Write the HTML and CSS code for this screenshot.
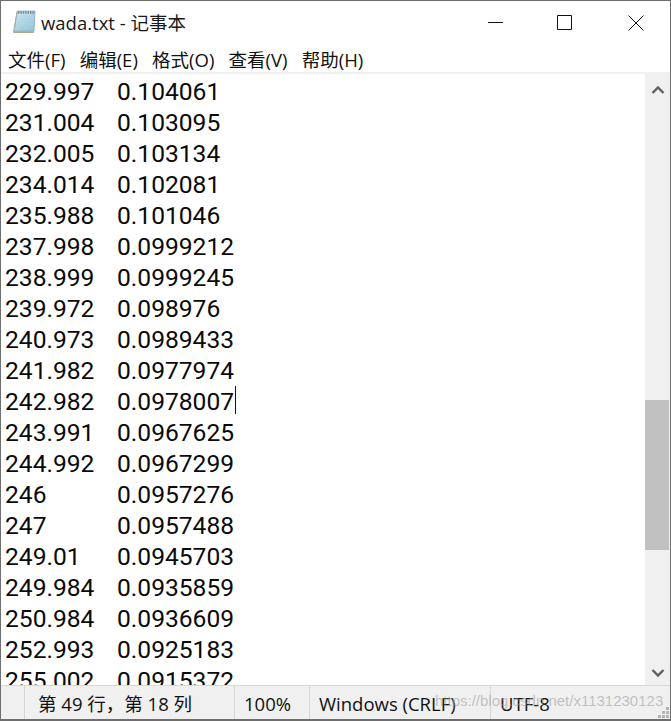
FILE: index.html
```html
<!DOCTYPE html>
<html lang="zh">
<head>
<meta charset="utf-8">
<title>wada.txt - 记事本</title>
<link rel="stylesheet" href="styles.css">
</head>
<body>
<div class="window">
  <header class="titlebar">
    <svg class="app-icon" width="26" height="28" viewBox="0 0 26 28">
      <defs>
        <linearGradient id="paper" x1="0" y1="0" x2="1" y2="1">
          <stop offset="0" stop-color="#d8edf5"/>
          <stop offset="1" stop-color="#8fc0d6"/>
        </linearGradient>
      </defs>
      <path d="M5 3.500H22.500L21.500 24.500H1.500Z" fill="#c9b98f" stroke="#b5a98c" stroke-width="1"/>
      <path d="M5.500 3H23L22 23H2Z" fill="url(#paper)" stroke="#7fa9bd" stroke-width=".7"/>
      <path d="M4.500 8H22M4 11H22M4 14H22M3.500 17H21.500M3 20H21.500" stroke="#a9d0e0" stroke-width=".8"/>
      <path d="M6 4.500H23" stroke="#76838b" stroke-width="2.4" stroke-dasharray="1.4 1"/>
    </svg>
    <span class="title">wada.txt - 记事本</span>
    <div class="controls">
      <svg class="ctl" width="16" height="16" viewBox="0 0 16 16"><path d="M0 7.500H15" stroke="#111" fill="none"/></svg>
      <svg class="ctl ctl-max" width="16" height="16" viewBox="0 0 16 16"><path d="M1.500 .5H15.500V14.500H1.500Z" stroke="#111" fill="none"/></svg>
      <svg class="ctl" width="16" height="16" viewBox="0 0 16 16"><path d="M.5 .5L15.500 15.500M15.500 .5L.5 15.500" stroke="#111" fill="none"/></svg>
    </div>
  </header>
  <nav class="menubar">
    <span>文件(F)</span><span>编辑(E)</span><span>格式(O)</span><span>查看(V)</span><span>帮助(H)</span>
  </nav>
  <main class="editor">
    <div class="text">
      <div class="row"><span class="c1">229.997</span><span>0.104061</span></div>
      <div class="row"><span class="c1">231.004</span><span>0.103095</span></div>
      <div class="row"><span class="c1">232.005</span><span>0.103134</span></div>
      <div class="row"><span class="c1">234.014</span><span>0.102081</span></div>
      <div class="row"><span class="c1">235.988</span><span>0.101046</span></div>
      <div class="row"><span class="c1">237.998</span><span>0.0999212</span></div>
      <div class="row"><span class="c1">238.999</span><span>0.0999245</span></div>
      <div class="row"><span class="c1">239.972</span><span>0.098976</span></div>
      <div class="row"><span class="c1">240.973</span><span>0.0989433</span></div>
      <div class="row"><span class="c1">241.982</span><span>0.0977974</span></div>
      <div class="row"><span class="c1">242.982</span><span class="caret">0.0978007</span></div>
      <div class="row"><span class="c1">243.991</span><span>0.0967625</span></div>
      <div class="row"><span class="c1">244.992</span><span>0.0967299</span></div>
      <div class="row"><span class="c1">246</span><span>0.0957276</span></div>
      <div class="row"><span class="c1">247</span><span>0.0957488</span></div>
      <div class="row"><span class="c1">249.01</span><span>0.0945703</span></div>
      <div class="row"><span class="c1">249.984</span><span>0.0935859</span></div>
      <div class="row"><span class="c1">250.984</span><span>0.0936609</span></div>
      <div class="row"><span class="c1">252.993</span><span>0.0925183</span></div>
      <div class="row"><span class="c1">255.002</span><span>0.0915372</span></div>
    </div>
    <aside class="scrollbar">
      <svg class="arrow" width="14" height="10" viewBox="0 0 14 10"><path d="M1.500 8L7 2.500L12.500 8" stroke="#606060" stroke-width="2.4" fill="none"/></svg>
      <div class="track"><div class="thumb"></div></div>
      <svg class="arrow" width="14" height="10" viewBox="0 0 14 10"><path d="M1.500 2L7 7.500L12.500 2" stroke="#606060" stroke-width="2.4" fill="none"/></svg>
    </aside>
  </main>
  <footer class="statusbar">
    <span class="cell first"></span>
    <span class="cell pos">第 49 行，第 18 列</span>
    <span class="cell zoom">100%</span>
    <span class="cell eol">Windows (CRLF)</span>
    <span class="cell enc">UTF-8</span>
    <span class="watermark">https://blog.csdn.net/x1131230123</span>
    <svg class="grip" width="12" height="12" viewBox="0 0 12 12"><path d="M8 0h3v3H8zM4 4h3v3H4zM8 4h3v3H8zM0 8h3v3H0zM4 8h3v3H4zM8 8h3v3H8z" fill="#b4b4b4"/></svg>
  </footer>
</div>
</body>
</html>
```
FILE: styles.css
```css
* { box-sizing: border-box; }
html, body { margin: 0; height: 100%; overflow: hidden; background: #fff; }
body { font-family: Roboto, "Noto Sans CJK SC", sans-serif; color: #111; }
.window {
  width: 671px; height: 721px;
  display: flex; flex-direction: column;
  border: 1px solid #6e6e6e; border-bottom-width: 2px;
  position: relative; overflow: hidden;
}
.titlebar { height: 41px; flex: none; display: flex; align-items: center; padding-left: 11px; }
.app-icon { flex: none; margin-right: 3px; margin-top: 1px; }
.title { font-size: 18.5px; font-family: "Open Sans", "Noto Sans CJK SC", sans-serif; color: #1a1a1a; }
.controls { margin-left: auto; display: flex; gap: 52px; padding-right: 26px; margin-top: 3px; }
.ctl { display: block; }
.ctl-max { margin-right: 4px; }
.menubar { height: 32px; flex: none; display: flex; align-items: center; gap: 14.2px; padding-left: 7px; font-size: 18.5px; font-family: "Open Sans", "Noto Sans CJK SC", sans-serif; border-bottom: 2px solid #f0f0f0; padding-top: 3px; }
.menubar span { white-space: nowrap; }
.editor { flex: 1; min-height: 0; display: flex; }
.text { flex: 1; min-width: 0; overflow: hidden; padding: 2px 0 0 4px; font-size: 24.6px; line-height: 31px; color: #0a0a0a; }
.row { display: flex; white-space: nowrap; height: 31px; }
.c1 { width: 112px; flex: none; }
.caret { border-right: 1px solid #111; height: 28px; padding-right: 1px; }
.scrollbar { width: 25px; flex: none; background: #f0f0f0; display: flex; flex-direction: column; align-items: center; padding: 11px 0 7px; }
.arrow { flex: none; }
.track { flex: 1; width: 100%; padding-top: 305px; }
.thumb { height: 150px; width: 24px; background: #c1c1c1; }
.statusbar { height: 34px; flex: none; position: relative; display: flex; align-items: center; background: #f0f0f0; border-top: 1px solid #d8d8d8; font-size: 18.5px; font-family: "Open Sans", "Noto Sans CJK SC", sans-serif; }
.cell { height: 100%; display: flex; align-items: center; border-right: 1px solid #d6d6d6; white-space: nowrap; flex: none; padding-top: 1px; }
.first { width: 24px; }
.pos { width: 210px; padding-left: 13px; }
.zoom { width: 75px; padding-left: 9px; }
.eol { width: 181px; padding-left: 9px; }
.enc { border-right: 0; padding-left: 9px; }
.watermark { position: absolute; left: 434px; top: 6px; font-size: 15px; font-family: "Liberation Sans", sans-serif; color: rgba(150,150,150,.55); white-space: nowrap; }
.grip { position: absolute; right: 0; bottom: 0; }
```
